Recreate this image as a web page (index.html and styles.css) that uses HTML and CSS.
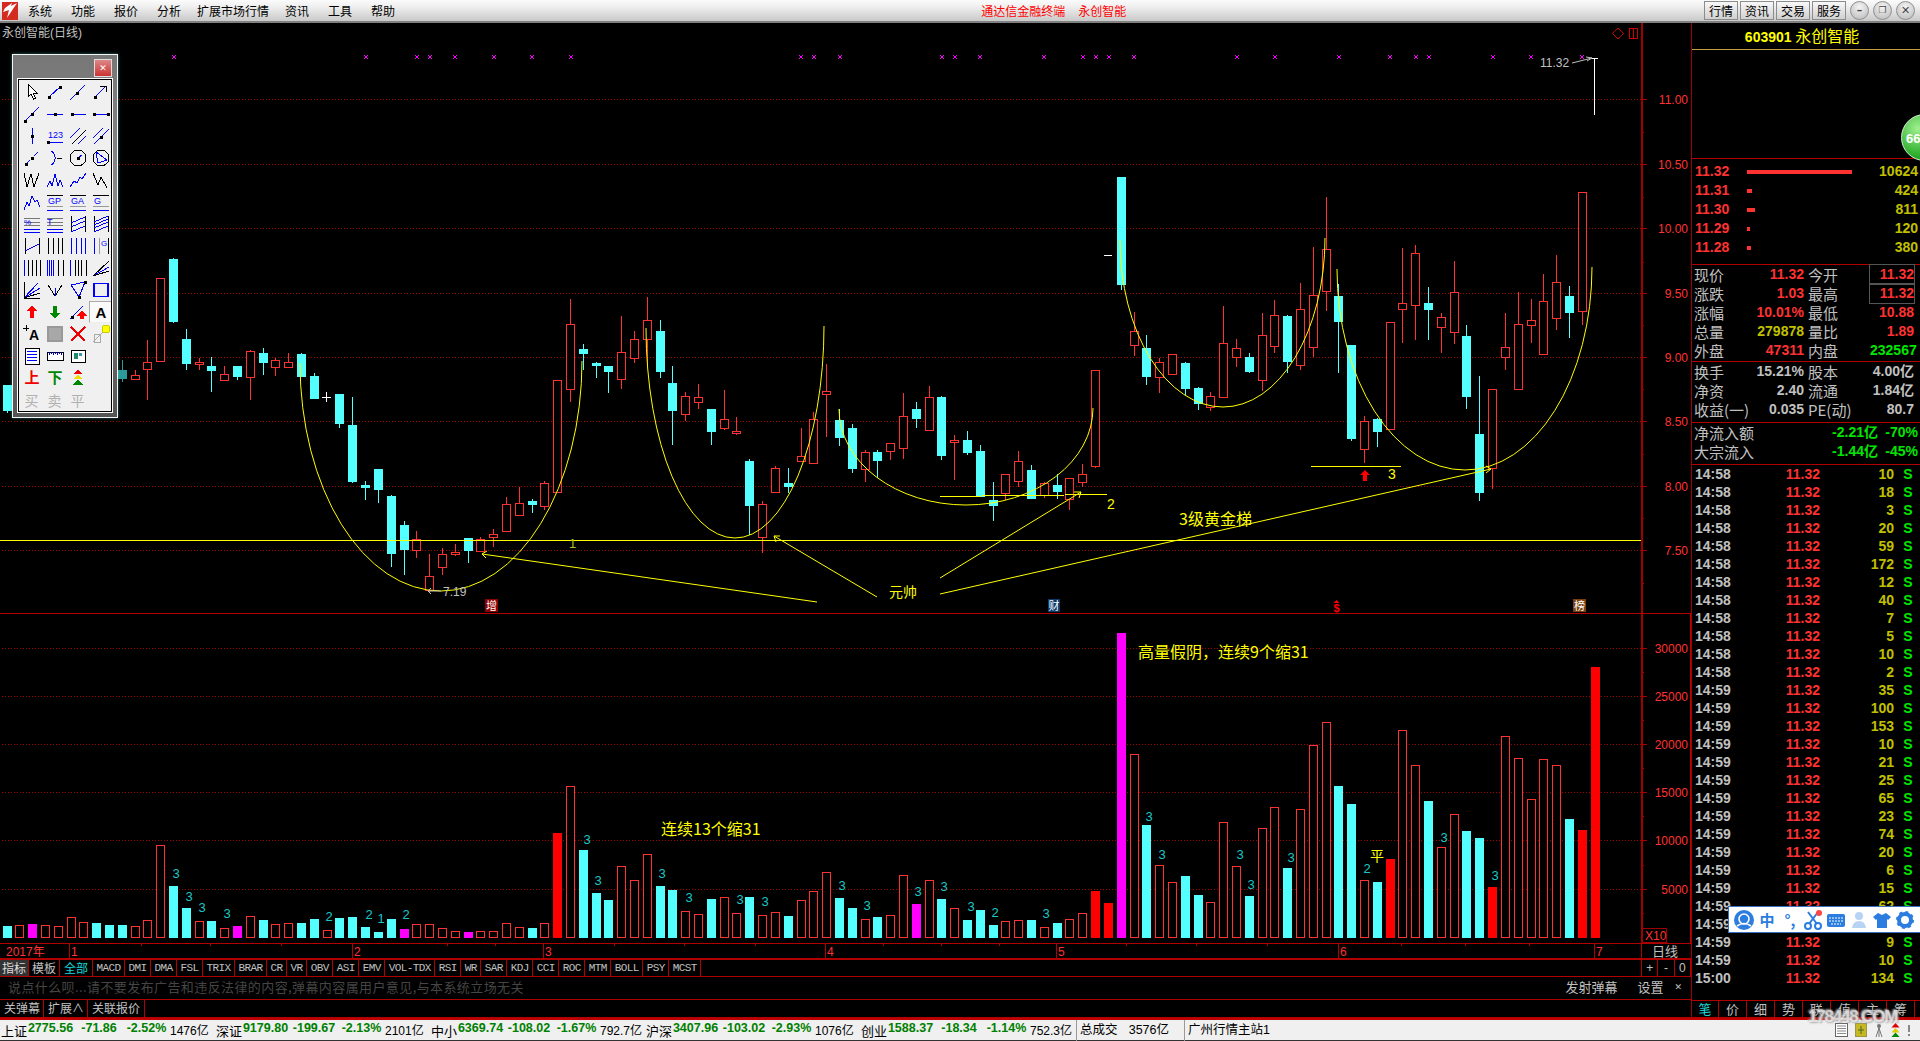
FILE: index.html
```html
<!DOCTYPE html>
<html lang="zh-CN">
<head>
    <meta charset="UTF-8">
    <title>永创智能(日线)</title>
    <link rel="stylesheet" href="styles.css">
</head>
<body>

    <div class="menubar">
        <svg class="logo" viewBox="0 0 16 18">
            <rect width="16" height="18" fill="#d42a20"/>
            <path d="M1 10 L7 8 L5 16 L15 1 L9 4 L10 1 L3 6 Z" fill="#fff"/>
        </svg>
        <div class="menu">
            <span>系统</span><span>功能</span><span>报价</span><span>分析</span>
            <span class="wide">扩展市场行情</span><span>资讯</span><span>工具</span><span>帮助</span>
        </div>
        <div class="app-title">通达信金融终端<b>永创智能</b></div>
        <div class="mb-right">
            <button class="mb-btn">行情</button>
            <button class="mb-btn">资讯</button>
            <button class="mb-btn">交易</button>
            <button class="mb-btn">服务</button>
            <span class="win-btn">&#8211;</span>
            <span class="win-btn win-small">&#10064;</span>
            <span class="win-btn">&#10005;</span>
        </div>
    </div>

    <div class="middle">
        <div class="left">
            <svg id="chart" class="chart" viewBox="0 23 1691 936"></svg>

            <div class="toolbox">
                <div class="toolbox-head"><span class="toolbox-close">&#10005;</span></div>
                <div class="tool-grid" id="toolGrid"></div>
            </div>

            <div class="tabrow">
                <span class="tab tab-cn tab-on">指标</span>
                <span class="tab tab-cn">模板</span>
                <span class="tab tab-cn tab-all">全部</span>
                <span class="tab">MACD</span><span class="tab">DMI</span><span class="tab">DMA</span>
                <span class="tab">FSL</span><span class="tab">TRIX</span><span class="tab">BRAR</span>
                <span class="tab">CR</span><span class="tab">VR</span><span class="tab">OBV</span>
                <span class="tab">ASI</span><span class="tab">EMV</span><span class="tab">VOL-TDX</span>
                <span class="tab">RSI</span><span class="tab">WR</span><span class="tab">SAR</span>
                <span class="tab">KDJ</span><span class="tab">CCI</span><span class="tab">ROC</span>
                <span class="tab">MTM</span><span class="tab">BOLL</span><span class="tab">PSY</span>
                <span class="tab">MCST</span>
                <div class="zoom-btns"><span>+</span><span>-</span><span>0</span></div>
            </div>

            <div class="danmu">
                <span class="danmu-hint">说点什么呗...请不要发布广告和违反法律的内容,弹幕内容属用户意见,与本系统立场无关</span>
                <span class="danmu-send">发射弹幕</span>
                <span class="danmu-set">设置</span>
                <span class="danmu-x">&#10005;</span>
            </div>

            <div class="subtabs">
                <span>关弹幕</span><span>扩展&#8743;</span><span>关联报价</span>
            </div>
        </div>

        <div class="side">
            <div class="stock-title"><b>603901</b> 永创智能</div>
            <div class="side-blank"><div class="score">66</div></div>

            <div class="book" id="book"></div>

            <div class="stats">
                <div class="stat"><span class="lab">现价</span><span class="val red">11.32</span><span class="lab">今开</span><span class="val red boxed">11.32</span></div>
                <div class="stat"><span class="lab">涨跌</span><span class="val red">1.03</span><span class="lab">最高</span><span class="val red boxed">11.32</span></div>
                <div class="stat"><span class="lab">涨幅</span><span class="val red">10.01%</span><span class="lab">最低</span><span class="val red">10.88</span></div>
                <div class="stat"><span class="lab">总量</span><span class="val olive">279878</span><span class="lab">量比</span><span class="val red">1.89</span></div>
                <div class="stat"><span class="lab">外盘</span><span class="val red">47311</span><span class="lab">内盘</span><span class="val green">232567</span></div>
            </div>

            <div class="stats stats-money">
                <div class="stat"><span class="lab">换手</span><span class="val">15.21%</span><span class="lab">股本</span><span class="val">4.00亿</span></div>
                <div class="stat"><span class="lab">净资</span><span class="val">2.40</span><span class="lab">流通</span><span class="val">1.84亿</span></div>
                <div class="stat"><span class="lab">收益(一)</span><span class="val">0.035</span><span class="lab">PE(动)</span><span class="val">80.7</span></div>
            </div>

            <div class="flows">
                <div class="flow"><span class="lab">净流入额</span><span class="val green">-2.21亿</span><span class="val green">-70%</span></div>
                <div class="flow"><span class="lab">大宗流入</span><span class="val green">-1.44亿</span><span class="val green">-45%</span></div>
            </div>

            <div class="ticks" id="ticks"></div>

            <div class="side-tabs">
                <span class="cyan">笔</span><span>价</span><span>细</span><span>势</span>
                <span>联</span><span>值</span><span>主</span><span>筹</span>
            </div>
        </div>

        <div class="watermark">178448.COM</div>

        <div class="ime">
            <svg viewBox="0 0 20 20"><circle cx="10" cy="10" r="10" fill="#2b7de0"/><circle cx="10" cy="9" r="5" fill="none" stroke="#fff" stroke-width="1.6"/><path d="M3 16q7-5 14 0" fill="none" stroke="#fff" stroke-width="1.6"/></svg>
            <span class="ime-text">中</span>
            <span class="ime-text">°,</span>
            <svg viewBox="0 0 20 20"><path d="M5 2l9 12M15 2l-9 12" stroke="#2b7de0" stroke-width="2"/><circle cx="5" cy="16" r="3" fill="none" stroke="#2b7de0" stroke-width="2"/><circle cx="15" cy="16" r="3" fill="none" stroke="#2b7de0" stroke-width="2"/><circle cx="16" cy="3" r="3" fill="#f44"/></svg>
            <svg viewBox="0 0 20 20"><rect x="1" y="4" width="18" height="13" rx="2" fill="#2b7de0"/><path d="M3 8h14M3 11h14M5 14h10" stroke="#fff" stroke-dasharray="2 1"/></svg>
            <svg viewBox="0 0 20 20"><circle cx="10" cy="6" r="4" fill="#b8d4f4"/><path d="M3 18q1-7 7-7t7 7z" fill="#b8d4f4"/></svg>
            <svg viewBox="0 0 20 20"><path d="M6 3l4 2 4-2 5 4-3 3-1-1v9H5V9l-1 1-3-3z" fill="#2b7de0"/></svg>
            <svg viewBox="0 0 20 20"><circle cx="10" cy="10" r="6" fill="none" stroke="#2b7de0" stroke-width="4"/><circle cx="10" cy="10" r="8" fill="none" stroke="#2b7de0" stroke-width="2" stroke-dasharray="3 3.3"/></svg>
        </div>
    </div>

    <div class="statusbar">
        <div class="idx"><span class="idx-name">上证</span><b>2775.56</b><b>-71.86</b><b>-2.52%</b><span>1476亿</span></div>
        <div class="idx"><span class="idx-name">深证</span><b>9179.80</b><b>-199.67</b><b>-2.13%</b><span>2101亿</span></div>
        <div class="idx"><span class="idx-name">中小</span><b>6369.74</b><b>-108.02</b><b>-1.67%</b><span>792.7亿</span></div>
        <div class="idx"><span class="idx-name">沪深</span><b>3407.96</b><b>-103.02</b><b>-2.93%</b><span>1076亿</span></div>
        <div class="idx"><span class="idx-name">创业</span><b>1588.37</b><b>-18.34</b><b>-1.14%</b><span>752.3亿</span></div>
        <div class="st-cell st-total"><span>总成交</span><span>3576亿</span></div>
        <div class="st-cell st-site">广州行情主站1</div>
        <div class="st-icons">
            <svg width="13" height="14" viewBox="0 0 13 14"><rect x="0.5" y="0.5" width="12" height="13" fill="#fff" stroke="#666"/><path d="M2 3h9M2 5.500h9M2 8h9M2 10.500h9" stroke="#888"/></svg>
            <svg width="12" height="14" viewBox="0 0 12 14"><rect width="12" height="14" rx="2" fill="#c8b820" stroke="#776"/><path d="M6 3v8M3 7h6" stroke="#463"/></svg>
            <svg width="10" height="14" viewBox="0 0 10 14"><path d="M5 4v10M2 14l3-9 3 9" stroke="#777" fill="none"/><circle cx="5" cy="3" r="2" fill="#777"/></svg>
            <svg width="9" height="14" viewBox="0 0 9 14"><path d="M4.500 0l4 4.500h-8z" fill="#d00"/><path d="M4.500 5l4 4.500h-8z" fill="#dc0"/><path d="M4.500 9.500l4 4.500h-8z" fill="#080"/></svg>
            <svg width="4" height="14" viewBox="0 0 4 14"><path d="M2 2v7M2 11v2" stroke="#888" stroke-width="2"/></svg>
        </div>
    </div>

    <script src="chart.js"></script>
</body>
</html>
```

FILE: styles.css
```css
* {
    box-sizing: border-box;
}

html, body {
    margin: 0;
    width: 1920px;
    height: 1041px;
    overflow: hidden;
    background: #000;
    font-family: "Noto Sans CJK SC", "Liberation Sans", sans-serif;
    font-size: 12px;
    color: #c0c0c0;
}

/* top menu */
.menubar {
    height: 23px;
    display: flex;
    align-items: center;
    background: linear-gradient(#fbfbfb, #f0f0f0 30%, #c9c9c9);
    border-bottom: 2px solid #808080;
    color: #000;
    position: relative;
}
.logo {
    width: 16px;
    height: 18px;
    margin-left: 2px;
}
.menu {
    display: flex;
    gap: 19px;
    margin-left: 10px;
    line-height: 20px;
}
.menu .wide {
    margin: 0 -3px;
}
.app-title {
    margin-left: 586px;
    color: #ff0000;
    line-height: 20px;
}
.app-title b {
    font-weight: normal;
    margin-left: 13px;
}
.mb-right {
    margin-left: auto;
    display: flex;
    align-items: center;
    gap: 2px;
    padding-right: 5px;
}
.mb-btn {
    width: 34px;
    height: 19px;
    padding: 0;
    font: 12px "Noto Sans CJK SC", sans-serif;
    color: #000;
    background: linear-gradient(#f8f8f8, #d0d0d0);
    border: 1px solid #8c8c8c;
}
.win-btn {
    width: 19px;
    height: 19px;
    margin-left: 2px;
    border-radius: 50%;
    border: 1px solid #909090;
    background: radial-gradient(circle at 50% 30%, #f4f4f4, #b8b8b8);
    color: #444;
    font: bold 11px/17px "DejaVu Sans", sans-serif;
    text-align: center;
}
.win-small {
    font-size: 9px;
}

.middle {
    height: 995px;
    display: flex;
    position: relative;
}

/* left column */
.left {
    width: 1691px;
    display: flex;
    flex-direction: column;
    position: relative;
}
.chart {
    display: block;
    width: 1691px;
    height: 936px;
    flex: none;
}
.chart text {
    font-family: "Noto Sans CJK SC", "Liberation Sans", sans-serif;
}
.chart .axis-label {
    font: 12px "Liberation Sans", sans-serif;
    fill: #ff3232;
    text-anchor: end;
}
.chart .date-label {
    font: 12px "Liberation Sans", "Noto Sans CJK SC", sans-serif;
    fill: #ff3232;
}
.chart .note {
    font-size: 16px;
    fill: #ffff00;
}
.chart .note-small {
    font: 12px "Liberation Sans", sans-serif;
    fill: #ffff00;
}
.chart .gray-small {
    font: 12px "Liberation Sans", "Noto Sans CJK SC", sans-serif;
    fill: #c0c0c0;
}
.chart .vol-digit {
    font: 13px "Liberation Sans", sans-serif;
    fill: #19c8c8;
    text-anchor: middle;
}
.chart .badge {
    font-size: 11px;
    fill: #fff;
    text-anchor: middle;
}

/* drawing tools palette */
.toolbox {
    position: absolute;
    left: 12px;
    top: 31px;
    width: 106px;
    height: 364px;
    border: 1px solid #f4f4f4;
    background: linear-gradient(#777, #888 40%, #555);
    padding: 0 4px;
    box-shadow: 0 0 3px rgba(80, 200, 200, 0.5);
}
.toolbox-head {
    height: 23px;
    display: flex;
    justify-content: flex-end;
    align-items: center;
    padding-right: 1px;
}
.toolbox-close {
    width: 18px;
    height: 18px;
    margin-top: 3px;
    background: linear-gradient(#d88, #c33);
    border: 1px solid #ddd;
    color: #fff;
    font: bold 9px/16px "DejaVu Sans", sans-serif;
    text-align: center;
}
.tool-grid {
    height: 335px;
    background: #f0f0f0;
    border: 1px solid #fff;
    outline: 1px solid #000;
    outline-offset: -2px;
    display: grid;
    grid-template-columns: repeat(4, 23px);
    grid-auto-rows: 22px;
    padding: 2px 2px 0;
}
.tool {
    display: flex;
    align-items: center;
    justify-content: center;
    font-size: 14px;
    color: #b0b0b0;
}
.tool svg {
    width: 20px;
    height: 20px;
}
.tool-sel {
    background: #fafafa;
    border: 1px solid #aaa;
    border-right-color: #eee;
    border-bottom-color: #eee;
}

/* indicator tabs */
.tabrow {
    height: 18px;
    flex: none;
    display: flex;
    align-items: stretch;
    border-top: 1px solid #b00000;
    border-bottom: 1px solid #b00000;
    position: relative;
    font: 11px/16px "Liberation Mono", monospace;
    letter-spacing: -0.6px;
}
.tab {
    padding: 0 3.5px;
    border-right: 1px solid #b00000;
    white-space: nowrap;
}
.tab-cn {
    font: 12px/15px "Noto Sans CJK SC", sans-serif;
    letter-spacing: 0;
    padding: 0 2px;
    width: 29px;
    text-align: center;
}
.tab-cn:nth-child(2) {
    width: 31px;
}
.tab-on {
    background: #333;
    color: #ddd;
}
.tab-all {
    width: 33px;
    color: #19d8d8;
}
.zoom-btns {
    position: absolute;
    left: 1641px;
    top: 0;
    bottom: 0;
    right: 0;
    display: flex;
    border-left: 1px solid #b00000;
    background: #000;
}
.zoom-btns span {
    flex: 1;
    text-align: center;
    border-right: 1px solid #b00000;
    font: 12px/16px "Liberation Sans", sans-serif;
    letter-spacing: 0;
}

.danmu {
    height: 23px;
    flex: none;
    display: flex;
    align-items: center;
    border-bottom: 1px solid #b00000;
    padding: 0 0 3px 8px;
    font-size: 13px;
}
.danmu-hint {
    color: #454545;
    flex: 1;
    letter-spacing: 0.4px;
}
.danmu-send {
    margin-right: 20px;
}
.danmu-set {
    margin-right: 11px;
}
.danmu-x {
    margin-right: 9px;
    font: 9px "DejaVu Sans", sans-serif;
}

.subtabs {
    height: 18px;
    flex: none;
    display: flex;
    border-bottom: 1px solid #b00000;
    font-size: 12px;
    line-height: 16px;
}
.subtabs span {
    padding-left: 4px;
    border-right: 1px solid #b00000;
    width: 44px;
    white-space: nowrap;
}
.subtabs span:last-child {
    width: 57px;
}

/* right column */
.side {
    width: 229px;
    border-left: 1px solid #a00000;
    display: flex;
    flex-direction: column;
    position: relative;
    font-size: 15px;
    overflow: hidden;
}
.stock-title {
    height: 27px;
    flex: none;
    border-bottom: 1px solid #c0a040;
    color: #ffff00;
    text-align: center;
    font-size: 16px;
    line-height: 25px;
    padding-right: 8px;
}
.stock-title b {
    font: bold 14px "Liberation Sans", sans-serif;
}
.side-blank {
    height: 109px;
    flex: none;
    border-bottom: 1px solid #b00000;
    position: relative;
}
.score {
    position: absolute;
    left: 209px;
    top: 64px;
    width: 47px;
    height: 47px;
    border-radius: 50%;
    background: radial-gradient(circle at 35% 30%, #a0f090, #30b030 60%, #108010);
    border: 1px solid #d0f0d0;
    color: #fff;
    font: bold 13px/47px "Liberation Sans", sans-serif;
    padding-left: 4px;
}
.book {
    height: 106px;
    flex: none;
    padding-top: 3px;
    border-bottom: 1px solid #b00000;
}
.book-row {
    height: 19px;
    display: flex;
    align-items: center;
    padding: 0 2px;
    font: bold 14px/19px "Liberation Sans", sans-serif;
}
.book-price {
    width: 53px;
    padding-left: 1px;
    color: #ff3232;
}
.book-bar {
    height: 4px;
    background: #ff3232;
}
.book-vol {
    margin-left: auto;
    color: #c0c000;
}

.stats {
    height: 97px;
    flex: none;
    border-bottom: 1px solid #b00000;
}
.stats-money {
    height: 61px;
}
.stat {
    height: 19px;
    display: grid;
    grid-template-columns: 30px 80px 70px 40px;
    column-gap: 0;
    padding: 0 2px;
    align-items: center;
}
.stat .lab:nth-child(3) {
    padding-left: 4px;
}
.lab {
    line-height: 19px;
    white-space: nowrap;
    color: #c0c0c0;
}
.val {
    font: bold 14px/19px "Liberation Sans", "Noto Sans CJK SC", sans-serif;
    text-align: right;
    color: #c0c0c0;
    white-space: nowrap;
}
.stat .val:last-child {
    margin-left: -4px;
}
.boxed {
    outline: 1px solid #555;
    outline-offset: 0;
}
.red {
    color: #ff3232;
}
.olive {
    color: #c0c000;
}
.green {
    color: #00e600;
}
.cyan {
    color: #19d8d8;
}
.flows {
    height: 42px;
    flex: none;
    border-bottom: 1px solid #b00000;
}
.flow {
    height: 19px;
    display: grid;
    grid-template-columns: 64px 120px 40px;
    padding: 0 2px;
}

.ticks {
    height: 535px;
    flex: none;
}
.tick-row {
    height: 18px;
    display: grid;
    grid-template-columns: 40px 85px 74px 26px;
    padding-left: 3px;
    font: bold 14px/18px "Liberation Sans", sans-serif;
    color: #c0c0c0;
}
.tick-row span:nth-child(2), .tick-row span:nth-child(3) {
    text-align: right;
}
.tick-row span:nth-child(4) {
    text-align: center;
    padding-left: 2px;
    color: #00e600;
}
.side-tabs {
    height: 18px;
    flex: none;
    display: grid;
    grid-template-columns: 27px repeat(7, 28px);
    border-top: 1px solid #b00000;
    border-bottom: 1px solid #b00000;
    font-size: 13px;
    line-height: 16px;
    text-align: center;
}
.side-tabs span {
    border-right: 1px solid #b00000;
}

/* site stamp burnt over the corner of the screenshot */
.watermark {
    position: absolute;
    left: 1808px;
    top: 984px;
    font: bold 17px/20px "Liberation Sans", sans-serif;
    letter-spacing: -1.2px;
    color: rgba(255, 255, 255, 0.6);
    text-shadow: 1px 1px 2px #aaa, -1px -1px 2px #aaa;
}

/* input method bar floating over the tick list */
.ime {
    position: absolute;
    left: 1728px;
    top: 883px;
    width: 192px;
    height: 27px;
    background: #fff;
    border: 1px solid #3a70c0;
    border-right: none;
    display: flex;
    align-items: center;
    padding-left: 5px;
}
.ime svg {
    width: 20px;
    height: 20px;
    margin-right: 3px;
}
.ime-text {
    width: 20px;
    margin-right: 3px;
    text-align: center;
    font-size: 15px;
    font-weight: bold;
    color: #2b7de0;
}

/* bottom index strip */
.statusbar {
    height: 23px;
    display: flex;
    align-items: center;
    background: #f0f0f0;
    border-top: 2px solid #c00000;
    border-bottom: 1px solid #333;
    color: #000;
    font: 12.5px "Liberation Sans", "Noto Sans CJK SC", sans-serif;
    padding-left: 1px;
}
.idx {
    width: 215px;
    display: grid;
    grid-template-columns: 25px 49px 48px 47px 46px;
    white-space: nowrap;
    flex: none;
}
.idx b {
    color: #008000;
    text-align: center;
}
.idx-name {
    font: 13px "Noto Sans CJK SC", sans-serif;
}
.idx span:last-child {
    font-size: 12px;
}
.st-cell {
    height: 21px;
    line-height: 21px;
    border-left: 1px solid #999;
    flex: none;
    padding-left: 3px;
    white-space: nowrap;
}
.st-total {
    width: 108px;
    display: flex;
    justify-content: space-between;
    padding-right: 15px;
}
.st-site {
    width: 100px;
}
.st-icons {
    margin-left: auto;
    display: flex;
    align-items: center;
    gap: 7px;
    padding-right: 9px;
}
```

FILE: chart.js
```js
// chart + side panel data. all chart y values are page pixels (viewBox starts at y=23)
const XSTEP = 12.807;
const RED = "#ff3232", CYAN = "#54ffff", GRID = "#a80000", YEL = "#ffff00";

function cx(i) {
    return Math.round(6.5 + XSTEP * i);
}

// [index, type, wick top, body top, body bottom, wick bottom]
const candles = [
    [0, "c", 385, 385, 410, 413], [9, "d", 360, 370, 378, 382], [10, "r", 370, 375, 379, 380],
    [11, "r", 340, 362, 369, 400], [12, "r", 278, 278, 361, 361], [13, "c", 258, 259, 321, 323],
    [14, "c", 329, 339, 363, 370], [15, "r", 358, 362, 364, 370], [16, "c", 357, 366, 370, 392],
    [17, "r", 366, 374, 380, 380], [18, "c", 366, 366, 376, 380], [19, "r", 350, 351, 377, 400],
    [20, "c", 348, 353, 362, 375], [21, "r", 358, 360, 367, 376], [22, "r", 353, 362, 367, 368],
    [23, "c", 353, 354, 376, 376], [24, "c", 373, 376, 398, 399], [26, "c", 394, 394, 423, 428],
    [27, "c", 397, 425, 481, 483], [28, "c", 481, 485, 487, 500], [29, "c", 469, 469, 489, 503],
    [30, "c", 495, 496, 553, 567], [31, "c", 521, 525, 549, 575], [32, "r", 531, 539, 550, 558],
    [33, "r", 554, 576, 590, 592], [34, "r", 548, 554, 567, 575], [35, "r", 544, 552, 554, 556],
    [36, "c", 538, 538, 550, 563], [37, "r", 537, 539, 551, 551], [38, "r", 529, 534, 537, 547],
    [39, "r", 497, 504, 531, 531], [40, "r", 487, 503, 515, 515], [41, "c", 499, 501, 504, 513],
    [42, "r", 481, 483, 506, 510], [43, "r", 380, 380, 492, 492], [44, "r", 299, 324, 389, 402],
    [45, "c", 344, 349, 353, 370], [46, "c", 362, 363, 365, 378], [47, "c", 366, 366, 371, 393],
    [48, "r", 316, 352, 379, 389], [49, "r", 331, 339, 358, 363], [50, "r", 297, 320, 339, 365],
    [51, "c", 320, 331, 371, 378], [52, "c", 366, 383, 410, 445], [53, "r", 392, 396, 414, 421],
    [54, "r", 384, 397, 402, 409], [55, "c", 409, 409, 431, 445], [56, "r", 390, 419, 428, 430],
    [57, "r", 417, 431, 433, 435], [58, "c", 459, 461, 505, 535], [59, "r", 501, 504, 537, 553],
    [60, "r", 466, 468, 492, 492], [61, "c", 468, 483, 486, 493], [62, "r", 428, 456, 461, 461],
    [63, "r", 412, 419, 463, 464], [64, "r", 364, 391, 394, 437], [65, "c", 409, 420, 437, 446],
    [66, "c", 424, 428, 468, 473], [67, "r", 450, 452, 469, 482], [68, "c", 450, 452, 460, 478],
    [69, "r", 443, 443, 451, 460], [70, "r", 393, 416, 448, 459], [71, "c", 402, 409, 418, 428],
    [72, "r", 386, 397, 430, 430], [73, "c", 396, 397, 455, 460], [74, "r", 435, 440, 442, 480],
    [75, "c", 431, 440, 452, 455], [76, "c", 445, 451, 496, 496], [77, "c", 482, 500, 505, 521],
    [78, "r", 474, 474, 493, 500], [79, "r", 451, 461, 481, 487], [80, "c", 465, 470, 498, 498],
    [81, "r", 482, 483, 495, 498], [82, "c", 474, 485, 491, 499], [83, "r", 478, 478, 499, 510],
    [84, "r", 464, 474, 482, 487], [85, "r", 370, 370, 466, 468], [87, "c", 177, 177, 284, 290],
    [88, "r", 312, 331, 345, 356], [89, "c", 335, 348, 376, 385], [90, "r", 358, 362, 377, 393],
    [91, "r", 354, 354, 374, 375], [92, "c", 362, 363, 388, 395], [93, "c", 387, 388, 403, 410],
    [94, "r", 392, 396, 407, 411], [95, "r", 306, 343, 397, 397], [96, "r", 339, 348, 357, 367],
    [97, "c", 353, 357, 371, 373], [98, "r", 313, 335, 380, 391], [99, "r", 300, 315, 346, 353],
    [100, "c", 315, 316, 361, 373], [101, "r", 283, 309, 365, 370], [102, "r", 247, 295, 347, 357],
    [103, "r", 197, 249, 291, 311], [104, "c", 284, 296, 321, 373], [105, "c", 345, 345, 438, 441],
    [106, "r", 416, 421, 449, 463], [107, "c", 418, 419, 431, 447], [108, "r", 322, 322, 429, 429],
    [109, "r", 248, 303, 309, 343], [110, "r", 245, 253, 305, 340], [111, "c", 287, 303, 309, 340],
    [112, "r", 313, 317, 327, 353], [113, "r", 261, 292, 332, 344], [114, "c", 325, 336, 396, 409],
    [115, "c", 376, 434, 492, 501], [116, "r", 389, 389, 468, 489], [117, "r", 313, 347, 357, 370],
    [118, "r", 292, 324, 389, 389], [119, "r", 299, 320, 325, 343], [120, "r", 274, 301, 354, 355],
    [121, "r", 255, 282, 318, 330], [122, "c", 286, 296, 312, 338], [123, "r", 192, 192, 311, 325]
];

// volume bar tops, one per candle: type + page y
const volumes = ("c926 r925 m924 r925 r926 r917 r922 c923 c925 c925 r926 r920 r845 c886 c908 r921 c921 r928 " +
    "m926 r916 c920 r924 r923 c923 c919 r930 c918 c917 c927 c932 c919 m929 r924 r924 r928 r931 m932 r931 r931 " +
    "r923 r927 c928 r923 R833 r786 c850 c893 c900 r866 r880 r854 c886 c890 r911 r914 c899 r897 r913 c897 r915 " +
    "r912 c916 r900 r891 r872 c898 c908 r919 c917 r915 r875 m904 r880 c899 r908 c920 c910 c925 r921 r920 c920 " +
    "r927 c923 r919 r913 R891 R903 m633 r754 c825 r865 r882 c876 c895 r902 r822 r866 c896 r828 r807 c868 r809 " +
    "r745 r722 c786 c804 r880 c882 R859 r730 r765 c801 r847 r814 c831 c838 R887 r736 r758 r799 r759 r765 c819 " +
    "R830 R667").split(" ");

const volDigits = [
    [176, 873, "3"], [189, 896, "3"], [202, 907, "3"], [227, 913, "3"], [329, 916, "2"], [369, 914, "2"],
    [381, 918, "1"], [406, 914, "2"], [587, 839, "3"], [598, 880, "3"], [662, 873, "3"], [689, 897, "3"],
    [740, 899, "3"], [765, 901, "3"], [842, 885, "3"], [867, 905, "3"], [918, 891, "3"], [944, 886, "3"],
    [971, 906, "3"], [995, 912, "2"], [1046, 913, "3"], [1149, 816, "3"], [1162, 854, "3"], [1240, 854, "3"],
    [1251, 884, "3"], [1291, 857, "3"], [1367, 868, "2"], [1444, 837, "3"], [1495, 875, "3"]
];

// the hand drawn "cups": left rim x,y, bottom x,y, right rim x,y
const cups = [
    [300, 363, 441, 591, 582, 361],
    [646, 328, 735, 538, 824, 326],
    [839, 409, 966, 505, 1093, 408],
    [1120, 240, 1223, 407, 1325, 238],
    [1337, 269, 1465, 470, 1592, 267]
];

const magentaX = [174, 366, 417, 430, 455, 494, 532, 571, 801, 814, 840, 942, 955, 980, 1044, 1083, 1096, 1109,
    1134, 1237, 1275, 1339, 1390, 1416, 1429, 1493, 1531, 1582];

const monthLines = [[69, "1"], [352, "2"], [543, "3"], [825, "4"], [1056, "5"], [1338, "6"], [1594, "7"]];
const minorTicks = [141, 210, 281, 447, 495, 614, 684, 755, 883, 941, 999, 1126, 1196, 1267, 1401, 1465, 1529];

const mainGrid = [[99, "11.00"], [164, "10.50"], [228, "10.00"], [293, "9.50"], [357, "9.00"], [421, "8.50"],
    [486, "8.00"], [550, "7.50"]];
const volGrid = [[648, "30000"], [696, "25000"], [744, "20000"], [792, "15000"], [840, "10000"], [889, "5000"]];

function drawChart() {
    let s = "";
    const line = (x1, y1, x2, y2, c, extra) =>
        `<line x1="${x1}" y1="${y1}" x2="${x2}" y2="${y2}" stroke="${c}" ${extra || ""}/>`;
    const text = (x, y, cls, str, fill) =>
        `<text x="${x}" y="${y}" class="${cls}"${fill ? ` style="fill:${fill}"` : ""}>${str}</text>`;

    s += '<g shape-rendering="crispEdges">';
    mainGrid.concat(volGrid).forEach(g => {
        s += line(2, g[0] + 0.5, 1641, g[0] + 0.5, GRID, 'stroke-dasharray="1 2"');
        s += line(1641, g[0] + 0.5, 1647, g[0] + 0.5, GRID);
    });
    // minor price ticks
    [132, 197, 262, 325, 389, 454, 518, 583, 672, 720, 768, 816, 865, 913].forEach(y => {
        s += line(1641, y + 0.5, 1644, y + 0.5, GRID);
    });
    s += line(1641.5, 23, 1641.5, 943, "#a00000", 'stroke-width="2"');
    s += line(1690.5, 614, 1690.5, 943, "#c00000", 'stroke-width="2"');
    s += line(0, 613.5, 1691, 613.5, "#b00000");
    s += line(0, 943.5, 1691, 943.5, "#b00000");

    // candles
    candles.forEach(c => {
        const x = cx(c[0]);
        const col = c[1] === "r" ? RED : c[1] === "d" ? "#2a9a9a" : CYAN;
        const xm = x + 0.5;
        s += line(xm, c[2], xm, c[3], col) + line(xm, c[4], xm, c[5], col);
        if (c[1] === "r") {
            s += `<rect x="${x - 4 + 0.5}" y="${c[3] + 0.5}" width="8" height="${c[4] - c[3]}" fill="#000" stroke="${col}"/>`;
        } else {
            s += `<rect x="${x - 4}" y="${c[3]}" width="9" height="${c[4] - c[3] + 1}" fill="${col}"/>`;
        }
    });
    // white flat candles
    s += line(326.5, 392, 326.5, 402, "#fff") + line(322, 397.5, 331, 397.5, "#fff");
    s += line(1104, 255.5, 1112, 255.5, "#fff");
    s += line(1594.5, 58, 1594.5, 115, "#fff") + line(1591, 58.5, 1598, 58.5, "#fff");

    // volume bars
    volumes.forEach((v, i) => {
        const t = v[0], top = +v.slice(1), x = cx(i);
        if (t === "r") {
            s += `<rect x="${x - 4 + 0.5}" y="${top + 0.5}" width="8" height="${937 - top}" fill="#000" stroke="${RED}"/>`;
        } else {
            const f = t === "c" ? CYAN : t === "m" ? "#ff00ff" : "#ff0000";
            s += `<rect x="${x - 4}" y="${top}" width="9" height="${938 - top}" fill="${f}"/>`;
        }
    });

    // date axis
    s += line(0, 958.5, 1691, 958.5, "#b00000");
    s += line(1641.5, 943, 1641.5, 959, "#b00000");
    monthLines.forEach(m => {
        s += line(m[0] + 0.5, 944, m[0] + 0.5, 958, "#b00000");
    });
    minorTicks.forEach(x => {
        s += line(x + 0.5, 944, x + 0.5, 946, "#b00000");
    });
    // X10 box
    s += `<rect x="1642.5" y="928.5" width="24" height="14" fill="#000" stroke="#a00000"/>`;
    s += "</g>";

    // hand drawn curves and arrows, each cup is two quarter ellipses
    cups.forEach(c => {
        const ry1 = c[3] - c[1], ry2 = c[3] - c[5];
        s += `<path d="M${c[0]} ${c[1]}A${c[2] - c[0]} ${ry1} 0 0 0 ${c[2]} ${c[3]}` +
            `A${c[4] - c[2]} ${ry2} 0 0 0 ${c[4]} ${c[5]}" fill="none" stroke="${YEL}"/>`;
    });
    s += '<g stroke="#ffff00" fill="none" shape-rendering="crispEdges">';
    s += line(0, 540.5, 1641, 540.5, YEL);
    s += line(940, 496.5, 1107, 494.5, YEL);
    s += line(1311, 466.5, 1401, 466.5, YEL);
    s += "</g>";
    s += '<g stroke="#ffff00" fill="none">';
    s += '<path d="M817 602L482 554M482 554l5-3M482 554l4 4"/>';
    s += '<path d="M877 597L774 536M774 536h6M774 536l2 6"/>';
    s += '<path d="M940 578L1081 492M1081 492l-7 0M1081 492l-2 6"/>';
    s += '<path d="M940 594L1491 469M1491 469l-5-3M1491 469l-5 4"/>';
    s += "</g>";
    s += '<path d="M1360 475l5-5 5 5h-3v6h-4v-6z" fill="#ff0000"/>';

    // price + volume labels
    mainGrid.concat(volGrid).forEach(g => {
        s += text(1688, g[0] + 5, "axis-label", g[1]);
    });
    s += text(1645, 940, "date-label", "X10");

    s += text(2, 37, "gray-small", "永创智能(日线)");
    s += `<path d="M1618 28l5.500 5.500-5.500 5.500-5.500-5.500z" fill="none" stroke="#d00000"/>`;
    s += `<rect x="1629.500" y="28.500" width="8" height="10" fill="none" stroke="#d00000"/><path d="M1633.500 28v11" stroke="#d00000"/>`;

    magentaX.forEach(x => {
        s += `<path d="M${x - 2} 55l4 4M${x + 2} 55l-4 4" stroke="#ff00ff"/>`;
    });

    // price flags
    s += text(1540, 67, "gray-small", "11.32");
    s += '<path d="M1572 63L1592 58M1592 58l-6-1M1592 58l-5 3" stroke="#c0c0c0" fill="none"/>';
    s += text(443, 596, "gray-small", "7.19");
    s += '<path d="M428 591h13M428 591l3-3M428 591l3 3" stroke="#c0c0c0" fill="none"/>';

    // annotations
    s += text(1179, 525, "note", "3级黄金梯");
    s += `<text x="889" y="597" class="note" style="font-size:14px">元帅</text>`;
    s += text(661, 835, "note", "连续13个缩31");
    s += text(1138, 658, "note", "高量假阴，连续9个缩31");
    s += `<text x="1107" y="509" class="note-small" style="font-size:14px">2</text>`;
    s += `<text x="1388" y="479" class="note-small" style="font-size:14px">3</text>`;
    s += `<text x="569" y="548" class="note-small" style="font-size:13px;fill:#b0c020">1</text>`;
    s += `<text x="1370" y="861" class="note" style="font-size:14px">平</text>`;

    volDigits.forEach(d => {
        s += `<text x="${d[0]}" y="${d[1] + 5}" class="vol-digit">${d[2]}</text>`;
    });

    // event badges
    s += `<rect x="485" y="599" width="13" height="13" fill="#8b0000"/>` + text(491.5, 610, "badge", "增");
    s += `<rect x="1048" y="599" width="12" height="13" fill="#0a3a6a"/>` + text(1054, 610, "badge", "财");
    s += `<rect x="1573" y="599" width="13" height="13" fill="#7a4010"/>` + text(1579.5, 610, "badge", "榜");
    s += `<text x="1336.500" y="612" class="badge" style="fill:#ff0000;font-weight:bold;font-family:'Liberation Sans'">$</text>`;
    s += '<path d="M1336.500 600l3 3h-6z" fill="#ff0000"/>';

    // date labels
    s += text(6, 956, "date-label", "2017年");
    monthLines.forEach(m => {
        s += text(m[0] + 2, 956, "date-label", m[1]);
    });
    s += `<text x="1652" y="956" class="gray-small" style="font-size:13px">日线</text>`;

    document.getElementById("chart").innerHTML = s;
}

// ---- palette icons ----
const B = "#0000ff", K = "#000";
const ln = (x1, y1, x2, y2, c) => `<line x1="${x1}" y1="${y1}" x2="${x2}" y2="${y2}" stroke="${c || B}"/>`;
const dot = (x, y) => `<rect x="${x - 1.5}" y="${y - 1.5}" width="3" height="3" fill="#000"/>`;
const pl = (pts, c) => `<polyline points="${pts}" fill="none" stroke="${c || B}"/>`;
const tx = (x, y, str, size, c) =>
    `<text x="${x}" y="${y}" font-size="${size || 9}" fill="${c || B}" font-family="Liberation Sans">${str}</text>`;
const bars = (list) => list.map(b => ln(b[0], 2, b[0], 18, b[1] || K)).join("");
const rows = (list) => list.map(r => ln(2, r[0], 18, r[0], r[1] || B)).join("");

const tools = [
    '<path d="M6 2v13l3-3 2.500 5 2-1-2.500-5h4z" fill="#fff" stroke="#000"/>',
    ln(4, 15, 15, 5) + dot(4, 15) + dot(15, 5),
    ln(2, 18, 17, 3) + dot(9, 11),
    ln(4, 15, 15, 4) + pl("9,4 15,4 15,10", K) + dot(4, 15),

    ln(3, 17, 17, 3) + dot(3, 17) + dot(10, 10),
    ln(2, 10, 18, 10) + dot(10, 10),
    ln(3, 10, 18, 10) + dot(4, 10),
    ln(3, 10, 17, 10) + dot(3, 10) + dot(17, 10),

    ln(10, 2, 10, 18, B) + dot(10, 10),
    tx(3, 12, "123", 9) + ln(3, 16, 18, 16) + dot(3, 16),
    ln(2, 12, 12, 2) + ln(4, 18, 18, 4, K) + ln(10, 18, 18, 10),
    ln(2, 12, 12, 2) + ln(3, 18, 18, 3) + dot(10, 11),

    ln(4, 16, 8, 12) + ln(12, 8, 16, 4) + dot(4, 16) + dot(10, 10),
    '<path d="M6 3a8 8 0 0 1 0 14" fill="none" stroke="#00f"/><path d="M12 10h5" stroke="#000"/>',
    '<circle cx="10" cy="10" r="8" fill="none" stroke="#000"/>' + ln(10, 10, 14, 7) + dot(10, 10),
    '<circle cx="10" cy="10" r="8" fill="none" stroke="#000"/>' + pl("5,4 16,12 7,15 5,4"),

    pl("2,3 5,17 9,4 12,17 17,3", K),
    pl("2,17 5,11 7,16 10,4 13,16 15,10 18,17", B),
    pl("2,17 6,11 9,13 12,7 14,9 18,3"),
    pl("2,3 7,15 10,7 16,18", K),

    pl("2,18 5,10 7,14 10,4 13,10 15,8 18,15", B),
    ln(2, 3, 18, 3, K) + tx(3, 12, "GP", 9) + ln(2, 14, 18, 14, "#999") + ln(2, 18, 18, 18),
    ln(2, 3, 18, 3, K) + tx(3, 12, "GA", 9) + ln(2, 14, 18, 14, "#999") + ln(2, 18, 18, 18),
    ln(2, 3, 18, 3, K) + tx(3, 12, "G", 9) + ln(2, 14, 18, 14, "#999") + ln(2, 18, 18, 18),

    rows([[18], [15], [4, "#777"], [8, "#777"], [11, "#777"]]) + tx(2, 11, "%", 8),
    rows([[18], [15], [4, "#777"], [8, "#777"], [11, "#777"]]) + tx(2, 11, "T", 9),
    bars([[3], [17]]) + ln(3, 9, 17, 3) + ln(3, 13, 17, 7) + ln(3, 18, 17, 12),
    bars([[3], [17]]) + ln(3, 8, 17, 2) + ln(3, 11, 17, 5) + ln(3, 14, 17, 8) + ln(3, 18, 17, 12),

    bars([[3], [17]]) + ln(3, 15, 17, 8),
    bars([[3], [8], [13], [17]]),
    bars([[3, B], [8, B], [13, B], [17, B]]),
    bars([[3, B], [8, "#999"], [17, K]]) + tx(10, 10, "G", 8),

    bars([[2, B], [6], [10], [14], [18]]),
    bars([[2, B], [4, B], [6, B], [8, B], [13], [18]]),
    bars([[2, B], [7], [10], [13], [18]]),
    ln(2, 18, 18, 3, K) + ln(2, 18, 18, 9, B) + ln(2, 18, 18, 13, K),

    ln(2, 2, 2, 18, K) + ln(2, 18, 18, 18, K) + ln(2, 18, 16, 3) + ln(2, 18, 18, 8) + ln(2, 18, 18, 13, K),
    pl("3,5 10,16 17,5", K) + ln(10, 8, 10, 16, B),
    pl("3,5 17,2 11,17 3,5") + dot(17, 2) + dot(11, 17),
    '<rect x="3" y="3.500" width="14" height="13" fill="none" stroke="#00f" stroke-width="1.400"/>',

    '<path d="M10 3l5 6h-3v7H8V9H5z" fill="#f00"/>',
    '<path d="M10 17l5-6h-3V4H8v7H5z" fill="#080"/>',
    ln(2, 17, 15, 4) + dot(4, 15) + '<path d="M14 8l5 6h-3v3h-4v-3H9z" fill="#f00"/>',
    '<text x="10" y="16" text-anchor="middle" font-size="15" font-weight="bold" fill="#000" font-family="Liberation Sans">A</text>',

    '<text x="12" y="16" text-anchor="middle" font-size="14" font-weight="bold" fill="#000" font-family="Liberation Sans">A</text>' + ln(4, 1, 4, 7, K) + ln(1, 4, 7, 4, K),
    '<rect x="3" y="3" width="14" height="14" fill="#a8a8a8" stroke="#999" stroke-width="2"/>',
    '<path d="M3 3l14 14M17 3L3 17" stroke="#e00" stroke-width="2"/>',
    ln(2, 18, 16, 4, "#aaa") + '<rect x="3" y="10" width="6" height="8" fill="none" stroke="#aaa"/><circle cx="15" cy="5" r="4" fill="#ff0" stroke="#cc0"/>',

    '<rect x="3" y="2" width="14" height="16" fill="#fff" stroke="#000"/>' + ln(5, 5, 15, 5) + ln(5, 8, 15, 8) + ln(5, 11, 15, 11) + ln(5, 14, 15, 14),
    '<rect x="2" y="6" width="16" height="8" fill="#fff" stroke="#000"/><path d="M4 6v3M6 6v2M8 6v3M10 6v2M12 6v3M14 6v2M16 6v3" stroke="#00a"/>',
    '<rect x="3" y="4" width="14" height="12" fill="#fff" stroke="#000"/><rect x="6" y="7" width="4" height="6" fill="#286"/><rect x="11" y="7" width="3" height="3" fill="#39a"/>',
    "",

    '<text x="10" y="15" text-anchor="middle" font-size="15" font-weight="bold" fill="#e00" font-family="Noto Sans CJK SC">上</text>',
    '<text x="10" y="15" text-anchor="middle" font-size="15" font-weight="bold" fill="#080" font-family="Noto Sans CJK SC">下</text>',
    '<path d="M10 1l4 5H6z" fill="#e00"/><path d="M10 6l4 5H6z" fill="#ed0"/><path d="M10 11l5 6H5z" fill="#080"/>',
    "",

    "买", "卖", "平"
];

function buildTools() {
    const grid = document.getElementById("toolGrid");
    tools.forEach((t, i) => {
        const cell = document.createElement("div");
        cell.className = "tool" + (i === 43 ? " tool-sel" : "");
        if (t.length === 1) {
            cell.textContent = t;
        } else if (t) {
            cell.innerHTML = `<svg viewBox="0 0 20 20" shape-rendering="crispEdges">${t}</svg>`;
        }
        grid.appendChild(cell);
    });
}

// ---- side panel ----
function buildBook() {
    const book = [["11.32", 105, "10624"], ["11.31", 5, "424"], ["11.30", 8, "811"], ["11.29", 3, "120"], ["11.28", 4, "380"]];
    document.getElementById("book").innerHTML = book.map(b =>
        `<div class="book-row"><span class="book-price">${b[0]}</span>` +
        `<span class="book-bar" style="width:${b[1]}px"></span><span class="book-vol">${b[2]}</span></div>`
    ).join("");
}

function buildTicks() {
    const vols = [10, 18, 3, 20, 59, 172, 12, 40, 7, 5, 10, 2, 35, 100, 153, 10, 21, 25, 65, 23, 74, 20, 6, 15, 62, 8, 9, 10, 134];
    document.getElementById("ticks").innerHTML = vols.map((v, i) => {
        const t = i < 12 ? "14:58" : i < 28 ? "14:59" : "15:00";
        return `<div class="tick-row"><span>${t}</span><span class="red">11.32</span><span class="olive">${v}</span><span>S</span></div>`;
    }).join("");
}

drawChart();
buildTools();
buildBook();
buildTicks();
```
